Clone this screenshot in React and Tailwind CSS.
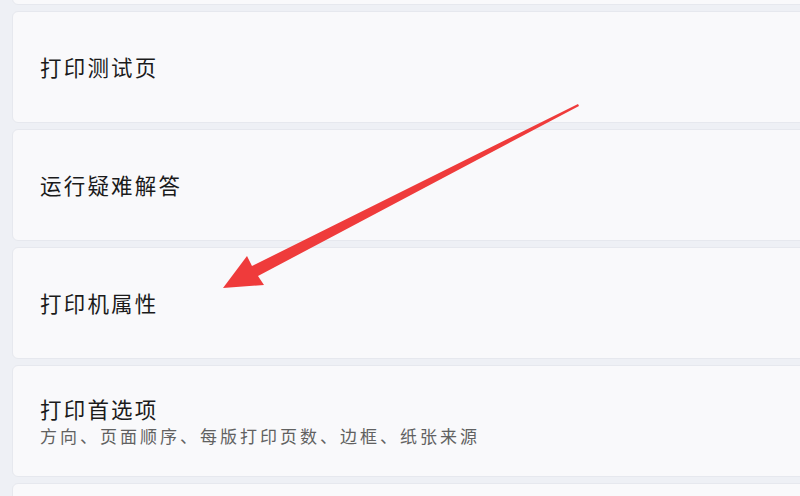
export default function App() {
  const font = { fontFamily: '"Noto Sans CJK SC", "Noto Sans", sans-serif' };
  const Card = ({ title, sub }) => (
    <div className="h-[112px] shrink-0 rounded-[6px] bg-[#f9f9fb] border border-[#e6e8ee] -mr-4 flex flex-col justify-center pl-[27px]">
      {title && (
        <div className="text-[21.5px] leading-[28px] tracking-[2.2px] text-[#1b1b1b]">{title}</div>
      )}
      {sub && (
        <div className="text-[17px] leading-[24px] tracking-[3px] text-[#616161] mt-[1px]">{sub}</div>
      )}
    </div>
  );
  return (
    <div className="relative w-[800px] h-[496px] overflow-hidden bg-[#eef0f5]" style={font}>
      <div className="flex flex-col gap-[6px] pl-[12px] -mt-[107px]">
        <Card />
        <Card title="打印测试页" />
        <Card title="运行疑难解答" />
        <Card title="打印机属性" />
        <Card title="打印首选项" sub="方向、页面顺序、每版打印页数、边框、纸张来源" />
        <Card />
      </div>
      <svg className="absolute inset-0 pointer-events-none" width="800" height="496" viewBox="0 0 800 496">
        <polygon
          points="223,288 247,256 252,266 578,104 579,106 258,276 264,285"
          fill="#ef3b3b"
        />
      </svg>
    </div>
  );
}
